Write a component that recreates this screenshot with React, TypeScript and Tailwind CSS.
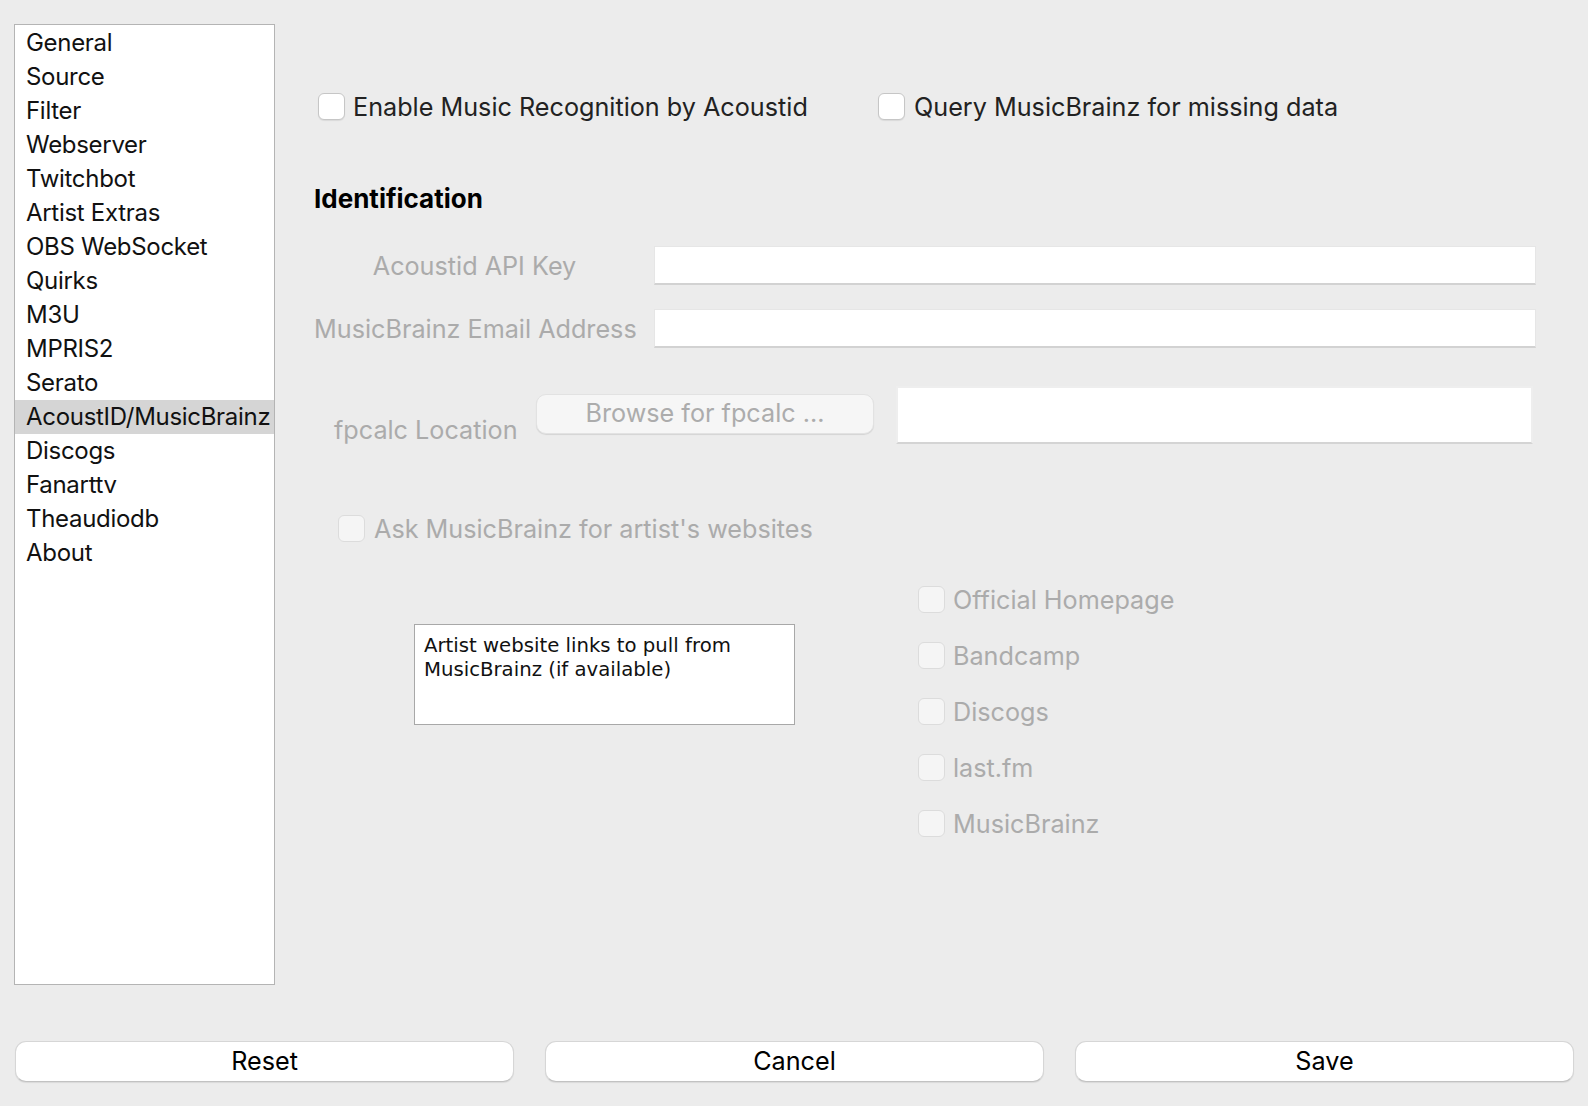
import React from "react";

const items = [
  "General",
  "Source",
  "Filter",
  "Webserver",
  "Twitchbot",
  "Artist Extras",
  "OBS WebSocket",
  "Quirks",
  "M3U",
  "MPRIS2",
  "Serato",
  "AcoustID/MusicBrainz",
  "Discogs",
  "Fanarttv",
  "Theaudiodb",
  "About",
];

function Box({ disabled }: { disabled?: boolean }) {
  return disabled ? (
    <div className="w-[27px] h-[27px] shrink-0 rounded-[6px] bg-[#f5f5f5] border border-[#dcdcdc]" />
  ) : (
    <div className="w-[27px] h-[27px] shrink-0 rounded-[6px] bg-white border border-[#c6c6c6] shadow-[0_1px_1px_rgba(0,0,0,0.08)]" />
  );
}

function Field({ className }: { className: string }) {
  return (
    <div
      className={
        "bg-white border border-[#e6e6e6] border-b-2 border-b-[#d2d2d2] " + className
      }
    />
  );
}

export default function App() {
  const font = { fontFamily: "Inter, 'Noto Sans', sans-serif" };
  return (
    <div
      className="w-[1588px] h-[1106px] bg-[#ececec] flex flex-col overflow-hidden text-[25.2px]"
      style={font}
    >
      <div className="flex">
        {/* list */}
        <div className="ml-[14px] mt-[24px] w-[261px] h-[961px] bg-white border border-[#b4b4b4] pt-[1px] shrink-0">
          {items.map((it) => (
            <div
              key={it}
              className={
                "h-[34px] leading-[34px] pl-[11px] text-[24px] tracking-[-0.3px] text-[#111] whitespace-nowrap overflow-hidden " +
                (it === "AcoustID/MusicBrainz" ? "bg-[#d5d5d5]" : "")
              }
            >
              {it}
            </div>
          ))}
        </div>

        {/* right panel */}
        <div className="flex-1 flex flex-col">
          <div className="mt-[92px] h-[28px] flex items-center pl-[43px]">
            <div className="w-[560px] flex items-center gap-[8px]">
              <Box />
              <span className="pt-[3px] text-[#222] whitespace-nowrap">
                Enable Music Recognition by Acoustid
              </span>
            </div>
            <div className="flex items-center gap-[9px]">
              <Box />
              <span className="pt-[3px] text-[#222] whitespace-nowrap">
                Query MusicBrainz for missing data
              </span>
            </div>
          </div>

          <div className="mt-[64px] h-[30px] leading-[30px] pl-[39px] font-bold text-[26px] text-black">
            Identification
          </div>

          <div className="mt-[32px] h-[39px] flex items-center pl-[39px]">
            <div className="pt-[2px] w-[321px] text-center text-[#ababab] whitespace-nowrap">
              Acoustid API Key
            </div>
            <Field className="ml-[19px] w-[882px] h-[39px]" />
          </div>

          <div className="mt-[24px] h-[39px] flex items-center pl-[39px]">
            <div className="pt-[2px] w-[321px] text-center text-[#ababab] whitespace-nowrap">
              MusicBrainz Email Address
            </div>
            <Field className="ml-[19px] w-[882px] h-[39px]" />
          </div>

          <div className="mt-[38px] h-[58px] flex items-start pl-[59px]">
            <div className="mt-[29px] h-[30px] leading-[30px] text-[#ababab] whitespace-nowrap w-[202px]">
              fpcalc Location
            </div>
            <div className="mt-[8px] w-[338px] h-[40px] rounded-[10px] bg-[#f6f6f6] border border-[#e2e2e2] shadow-[0_1px_1px_rgba(0,0,0,0.1)] flex items-center justify-center text-[#acacac] whitespace-nowrap leading-none pb-[1px]">
              Browse for fpcalc ...
            </div>
            <Field className="ml-[22px] w-[637px] h-[58px] border-2 border-[#eeeeee] border-b-[#d4d4d4]" />
          </div>

          <div className="mt-[70px] h-[28px] flex items-center pl-[63px] gap-[9px]">
            <Box disabled />
            <span className="pt-[3px] text-[#ababab] whitespace-nowrap">
              Ask MusicBrainz for artist's websites
            </span>
          </div>

          <div className="mt-[43px] flex items-start pl-[139px]">
            <div
              className="mt-[39px] w-[381px] h-[101px] bg-white border border-[#a8a8a8] pt-[9px] pl-[9px] text-[19.7px] leading-[24px] text-[#111]"
              style={{ fontFamily: "'DejaVu Sans', sans-serif" }}
            >
              Artist website links to pull from
              <br />
              MusicBrainz (if available)
            </div>
            <div className="ml-[123px] flex flex-col gap-[28px]">
              {["Official Homepage", "Bandcamp", "Discogs", "last.fm", "MusicBrainz"].map(
                (t) => (
                  <div key={t} className="h-[28px] flex items-center gap-[8px]">
                    <Box disabled />
                    <span className="pt-[3px] text-[#ababab] whitespace-nowrap">{t}</span>
                  </div>
                )
              )}
            </div>
          </div>
        </div>
      </div>

      <div className="mt-[56px] flex pl-[15px] gap-[31px]">
        {["Reset", "Cancel", "Save"].map((b) => (
          <div
            key={b}
            className="w-[499px] h-[41px] rounded-[11px] bg-white border border-[#d6d6d6] border-b-[#c2c2c2] shadow-[0_1px_1px_rgba(0,0,0,0.08)] flex items-center justify-center text-black leading-none"
          >
            {b}
          </div>
        ))}
      </div>
    </div>
  );
}
